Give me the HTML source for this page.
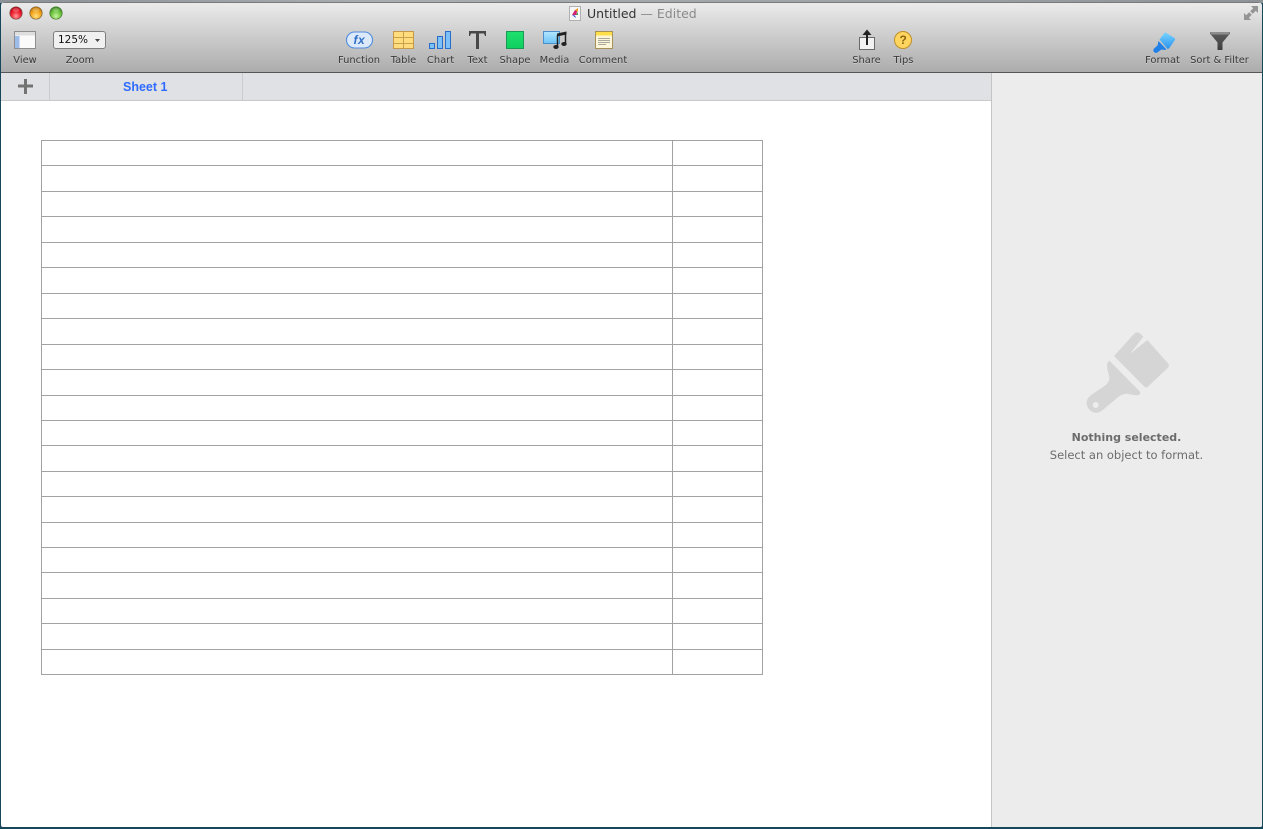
<!DOCTYPE html>
<html><head><meta charset="utf-8"><title>Untitled</title>
<style>
html,body{margin:0;padding:0;width:1263px;height:829px;overflow:hidden;background:#16475a}
body{position:relative;font-family:"DejaVu Sans","Liberation Sans",sans-serif}
#top{position:absolute;left:0;top:0;width:1263px;height:3px;background:linear-gradient(90deg,#8b9197,#a9adb0 30%,#9ea3a6 70%,#8d9296)}
#win{position:absolute;left:1px;top:2px;width:1261px;height:825px;border-radius:4px 4px 2px 2px;overflow:hidden;background:#fff}
#bar{position:absolute;left:0;top:0;width:1261px;height:69px;background:linear-gradient(#ebebeb 0,#dedede 20%,#c2c2c2 65%,#acacac 100%);border-top:1px solid #7a7a7a;border-bottom:1px solid #565656}
#tabs{position:absolute;left:0;top:71px;width:990px;height:27px;background:#e0e1e4;border-bottom:1px solid #c9c9c9}
.sep{position:absolute;top:71px;width:1px;height:27px;background:#cacbce}
#panel{position:absolute;left:990px;top:71px;width:271px;height:754px;background:#ececec;border-left:1px solid #c5c5c5}
.l{position:absolute;top:55px;font-size:9.900px;line-height:12px;color:#3a3a3a;white-space:nowrap;transform:translateX(-50%);text-shadow:0 1px 0 rgba(255,255,255,.3)}
.t{position:absolute;white-space:nowrap}
svg{position:absolute;left:0;top:0}
</style></head><body>
<div id="top"></div>
<div id="win">
<div id="bar"></div><div id="tabs"></div>
<div class="sep" style="left:48px"></div><div class="sep" style="left:241px"></div>
<div id="panel"></div>
</div>

<svg width="1263" height="829" viewBox="0 0 1263 829">
<defs>
<radialGradient id="r" cx=".5" cy=".75" r=".65"><stop offset="0" stop-color="#ff9a9a"/><stop offset=".6" stop-color="#f02030"/><stop offset="1" stop-color="#c00818"/></radialGradient>
<radialGradient id="y" cx=".5" cy=".75" r=".65"><stop offset="0" stop-color="#ffe080"/><stop offset=".6" stop-color="#f4a820"/><stop offset="1" stop-color="#c87c08"/></radialGradient>
<radialGradient id="g" cx=".5" cy=".75" r=".65"><stop offset="0" stop-color="#c8f4a0"/><stop offset=".6" stop-color="#70c840"/><stop offset="1" stop-color="#3c9020"/></radialGradient>
<linearGradient id="sh" x1="0" y1="0" x2="0" y2="1"><stop offset="0" stop-color="#1ee06c"/><stop offset="1" stop-color="#10d060"/></linearGradient>
<linearGradient id="md" x1="0" y1="0" x2="0" y2="1"><stop offset="0" stop-color="#b4e6ff"/><stop offset="1" stop-color="#6cc4f8"/></linearGradient>
<linearGradient id="br" x1="0" y1="0" x2="0" y2="1"><stop offset="0" stop-color="#78d4ff"/><stop offset="1" stop-color="#2a92ee"/></linearGradient>
<linearGradient id="fn" x1="0" y1="0" x2="0" y2="1"><stop offset="0" stop-color="#5e5e5e"/><stop offset="1" stop-color="#3e3e3e"/></linearGradient>
</defs>
<!-- traffic lights -->
<circle cx="16" cy="13" r="6.200" fill="url(#r)" stroke="#7a4a4a" stroke-width=".7"/>
<ellipse cx="16" cy="10" rx="3.500" ry="2" fill="#fff" opacity=".22"/>
<circle cx="36" cy="13" r="6.200" fill="url(#y)" stroke="#7a6238" stroke-width=".7"/>
<ellipse cx="36" cy="10" rx="3.500" ry="2" fill="#fff" opacity=".22"/>
<circle cx="56" cy="13" r="6.200" fill="url(#g)" stroke="#4a7438" stroke-width=".7"/>
<ellipse cx="56" cy="10" rx="3.500" ry="2" fill="#fff" opacity=".22"/>
<!-- view -->
<rect x="14.500" y="31.500" width="21" height="17" fill="#fafafa" stroke="#8e8e8e"/>
<rect x="15" y="32" width="20" height="3.500" fill="#dedede"/>
<rect x="15" y="36" width="4.500" height="12" fill="#9dbce8"/>
<!-- zoom -->
<rect x="53.500" y="31.500" width="52" height="17" rx="2.500" fill="#f0f0f0" stroke="#7f7f7f"/>
<path d="M95 39h5l-2.500 3z" fill="#444"/>
<!-- plus -->
<path d="M18 86h15M25.500 79v15" stroke="#737373" stroke-width="3" fill="none"/>
<!-- function -->
<rect x="346.500" y="32" width="26" height="16" rx="8" fill="#dce9fa" stroke="#4f8cdc" stroke-width="1.100"/>
<!-- table -->
<rect x="393.500" y="31.500" width="20" height="17" fill="#ffdc7c" stroke="#c49a4a"/>
<path d="M394 37.500h19M394 43.500h19M403.500 32v16" stroke="#c9a04e" fill="none"/>
<!-- chart -->
<rect x="429.500" y="43.500" width="5" height="5" fill="#7cc0f8" stroke="#2a6ec8"/>
<rect x="437.500" y="36.500" width="5" height="12" fill="#7cc0f8" stroke="#2a6ec8"/>
<rect x="445.500" y="31.500" width="5" height="17" fill="#7cc0f8" stroke="#2a6ec8"/>
<!-- text -->
<path d="M469 31h17v5h-1l-1-2.500h-5V49h-3V33.500h-5l-1 2.500h-1z" fill="#484848"/>
<!-- shape -->
<rect x="506.500" y="31.500" width="17" height="17" fill="url(#sh)" stroke="#1a9a55"/>
<!-- media -->
<rect x="543.500" y="31.500" width="16" height="12" fill="url(#md)" stroke="#4a90cc"/>
<path d="M557.500 35v11M565.500 33v10" stroke="#222" stroke-width="1.500" fill="none"/>
<path d="M557 33.500l9.500-2v3l-9.500 2z" fill="#222"/>
<ellipse cx="556" cy="47" rx="2.700" ry="2" fill="#222"/>
<ellipse cx="564" cy="44" rx="2.700" ry="2" fill="#222"/>
<!-- comment -->
<rect x="595.500" y="31.500" width="17" height="17" fill="#fdf6d8" stroke="#a8905a"/>
<rect x="596" y="32" width="16" height="3.500" fill="#ffdf4a"/>
<path d="M598 38.500h12M598 40.500h12M598 42.500h12M598 44.500h8" stroke="#a9a9a0" fill="none"/>
<!-- doc icon -->
<rect x="569.500" y="6.500" width="11" height="14" fill="#f6f6f6" stroke="#b0b0b0"/>
<path d="M572 15l3-5 2 1-.5 4z" fill="#d02070"/><path d="M575 10l3-2v4z" fill="#e8a020"/><path d="M572 15l3 .5 1 2.500z" fill="#2050d0"/><path d="M576 15l2-3v3z" fill="#30b050"/>
<!-- share -->
<rect x="859.500" y="37.500" width="15" height="12" fill="#f2f2f2" stroke="#6a6a6a"/>
<path d="M867 33v12" stroke="#222" stroke-width="2" fill="none"/>
<path d="M862.500 35l4.500-5.500 4.500 5.500z" fill="#222"/>
<!-- tips -->
<circle cx="903" cy="40" r="8.500" fill="#ffd560" stroke="#bf9028"/>
<!-- fullscreen -->
<path d="M1244 20v-7l2.200 2.200 3-3 2.600 2.600-3 3 2.200 2.200zM1258 6v7l-2.200-2.200-3 3-2.600-2.600 3-3L1251 6z" fill="#949494"/>
<!-- format brush -->
<path d="M1159.500 39.500l5-6.500q1-1 2 0l8 5q1 .8.500 2l-6 8.500-1.500.5z" fill="url(#br)"/>
<path d="M1158.500 41l8 8.500-2 .5-3-.5-3.500 2.500a2.600 2.600 0 0 1-4-3.500l3.500-3z" fill="#1f80e8"/>
<!-- filter -->
<path d="M1210 32h20v1.500l-7.500 9V50h-5v-7.500l-7.500-9z" fill="url(#fn)"/>
<path d="M1210 32h20l-1.500 2.500h-17z" fill="#8e8e8e"/>
<!-- big brush -->
<g transform="translate(1030 320) scale(.3333)" fill="#d5d5d5">
<path d="M252 108L312 42q8-8 16-3l12 11-40 52 52-42 62 70q6 7 0 13l-60 57q-6 5-12-1z"/>
<path fill-rule="evenodd" d="M238 122l92 93q4 8-8 11-12 0-30-5-14 0-26 9l-50 42c-12 10-32 8-40-6-10-14-8-28 6-40l44-30c10-8 14-18 11-30-4-16-12-34 1-44zM197 246a9 9 0 1 0 .1 0z"/>
</g>
<!-- table -->
<g fill="none" stroke="#a2a2a2" shape-rendering="crispEdges">
<rect x="41.500" y="140.500" width="721" height="534"/>
<path d="M672.500 140v534M41 165.500h721M41 191.500h721M41 216.500h721M41 242.500h721M41 267.500h721M41 293.500h721M41 318.500h721M41 344.500h721M41 369.500h721M41 395.500h721M41 420.500h721M41 445.500h721M41 471.500h721M41 496.500h721M41 522.500h721M41 547.500h721M41 572.500h721M41 598.500h721M41 623.500h721M41 649.500h721"/>
</g>
</svg>

<div class="t" style="left:587px;top:5.500px;font-size:12.500px;line-height:15px;color:#333">Untitled <span style="color:#8a8a8a">— Edited</span></div>
<div class="t" style="left:58px;top:33px;font-size:10.500px;line-height:14px;color:#111">125%</div>
<div class="t" style="left:353.500px;top:33px;font:italic bold 12px/14px 'Liberation Sans',sans-serif;color:#2f6fc8;letter-spacing:.5px">fx</div>
<div class="t" style="left:899.500px;top:33px;font:bold 12px/14px 'Liberation Sans',sans-serif;color:#8a6410">?</div>

<div class="l" style="left:25px">View</div>
<div class="l" style="left:80px">Zoom</div>
<div class="l" style="left:359px">Function</div>
<div class="l" style="left:403.500px">Table</div>
<div class="l" style="left:440.500px">Chart</div>
<div class="l" style="left:477.500px">Text</div>
<div class="l" style="left:515px">Shape</div>
<div class="l" style="left:554.500px">Media</div>
<div class="l" style="left:603px">Comment</div>
<div class="l" style="left:866.500px">Share</div>
<div class="l" style="left:903.500px">Tips</div>
<div class="l" style="left:1162.500px">Format</div>
<div class="l" style="left:1219.500px">Sort &amp; Filter</div>

<div class="t" style="left:123px;top:79.500px;font:bold 12.500px/15px 'Liberation Sans',sans-serif;color:#2f6bff">Sheet 1</div>
<div class="t" style="left:991px;width:271px;text-align:center;top:430px;font-size:11px;font-weight:bold;line-height:15px;color:#6c6c6c">Nothing selected.</div>
<div class="t" style="left:991px;width:271px;text-align:center;top:448px;font-size:11.500px;line-height:15px;color:#6c6c6c">Select an object to format.</div>
</body></html>
